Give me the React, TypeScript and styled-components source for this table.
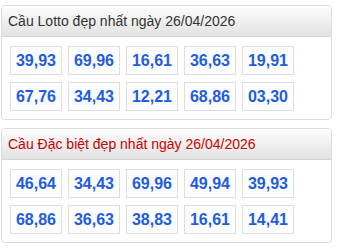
import React from "react";
import styled, { createGlobalStyle } from "styled-components";

const Global = createGlobalStyle`
  html, body { margin: 0; padding: 0; background: #fff; }
  body { font-family: "Liberation Sans", Arial, sans-serif; }
`;

const Page = styled.div`
  display: flex;
  flex-direction: column;
  gap: 8px;
  padding: 5px 5px 0 1px;
  width: 331px;
`;

const Card = styled.section`
  border: 1px solid #dcdcdc;
  border-radius: 4px;
  background: #fff;
  overflow: hidden;
`;

const Header = styled.h2<{ $red?: boolean }>`
  margin: 0;
  height: 31px;
  display: flex;
  align-items: center;
  padding: 0 6px;
  font-size: 14px;
  font-weight: normal;
  color: ${(p) => (p.$red ? "#cc0000" : "#333")};
  background: linear-gradient(to bottom, #fdfdfd 0%, #e2e2e2 100%);
  border-bottom: 1px solid #d6d6d6;
  box-sizing: border-box;
`;

const Grid = styled.div`
  display: grid;
  grid-template-columns: repeat(5, 52px);
  grid-auto-rows: 29px;
  column-gap: 6px;
  row-gap: 7px;
  padding: 9px 8px 8px 8px;
`;

const Cell = styled.div`
  border: 1px solid #dedede;
  background: #fcfdff;
  display: flex;
  align-items: center;
  justify-content: center;
  font-size: 16px;
  font-weight: bold;
  color: #1f5ce0;
  box-sizing: border-box;
`;

const lotto = ["39,93", "69,96", "16,61", "36,63", "19,91", "67,76", "34,43", "12,21", "68,86", "03,30"];
const special = ["46,64", "34,43", "69,96", "49,94", "39,93", "68,86", "36,63", "38,83", "16,61", "14,41"];

export default function App() {
  return (
    <>
      <Global />
      <Page>
        <Card>
          <Header>Cầu Lotto đẹp nhất ngày 26/04/2026</Header>
          <Grid>
            {lotto.map((n, i) => (
              <Cell key={i}>{n}</Cell>
            ))}
          </Grid>
        </Card>
        <Card>
          <Header $red>Cầu Đặc biệt đẹp nhất ngày 26/04/2026</Header>
          <Grid>
            {special.map((n, i) => (
              <Cell key={i}>{n}</Cell>
            ))}
          </Grid>
        </Card>
      </Page>
    </>
  );
}
